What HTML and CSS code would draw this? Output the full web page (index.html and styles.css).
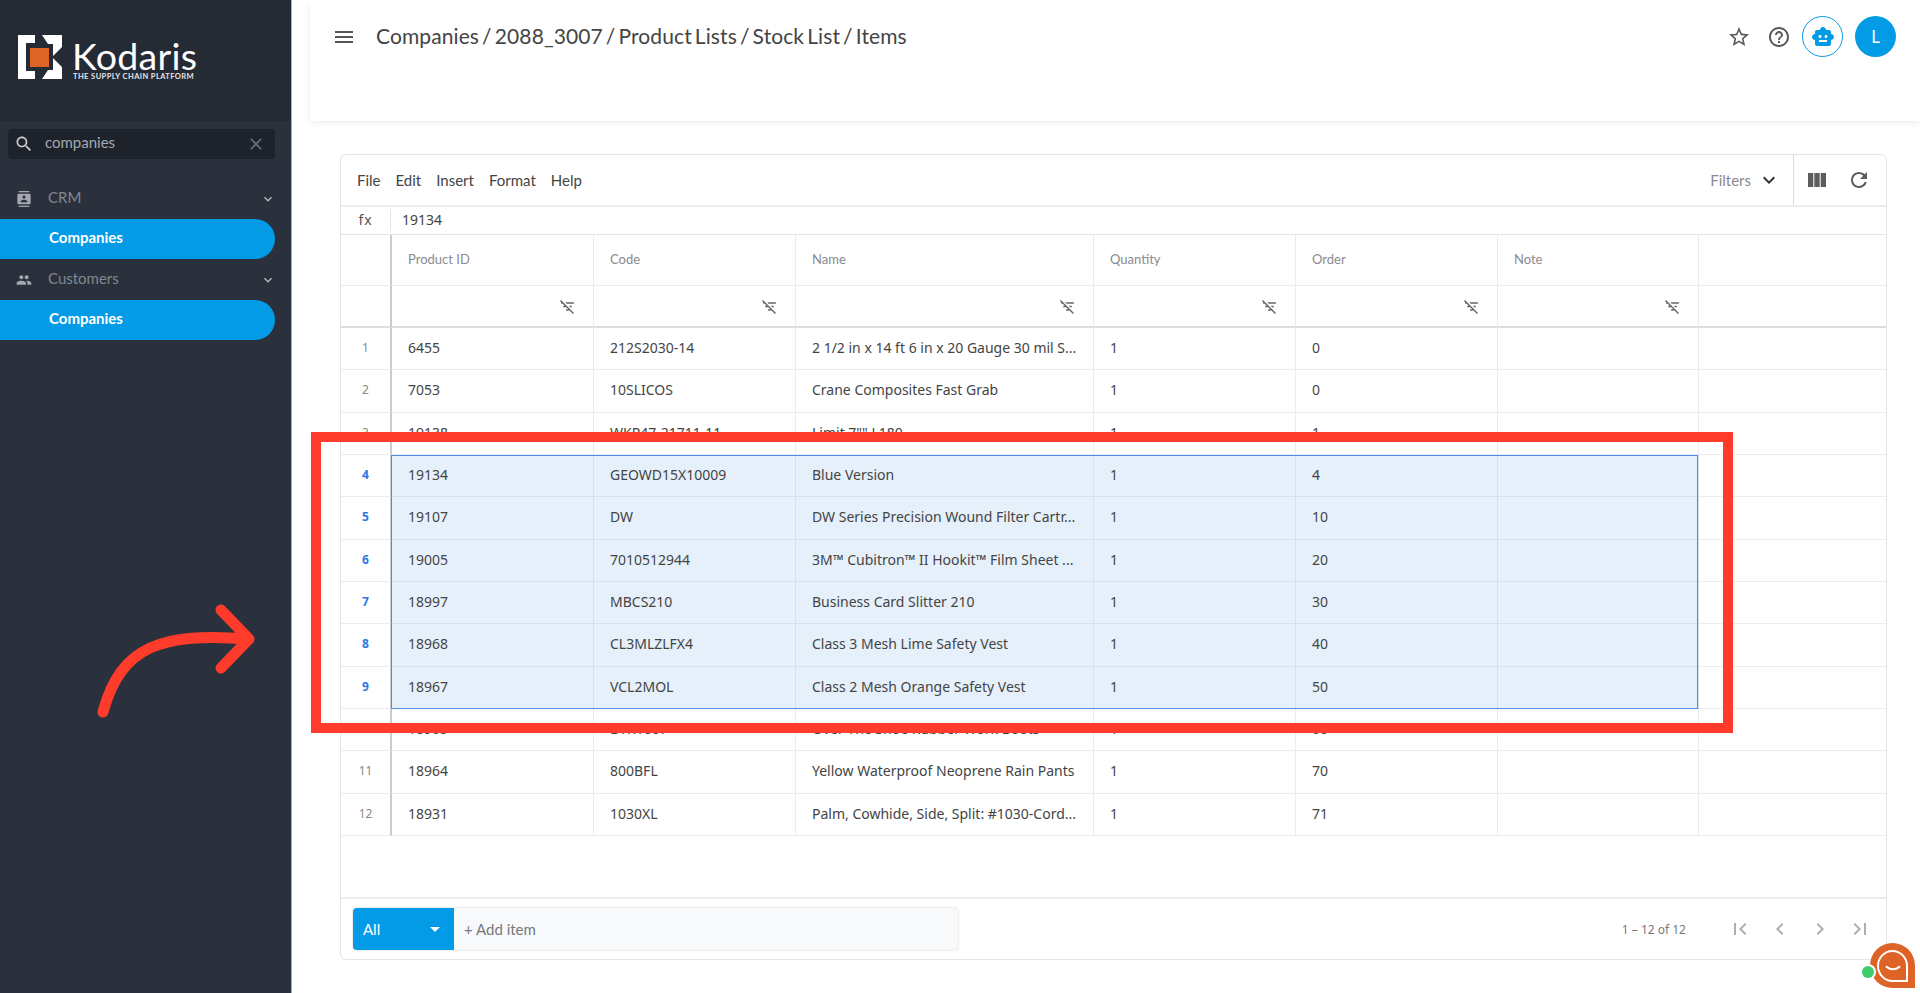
FILE: index.html
```html
<!DOCTYPE html>
<html lang="en">
<head>
<meta charset="utf-8">
<title>Kodaris - Items</title>
<link rel="stylesheet" href="styles.css">
</head>
<body>
<svg class="defs" width="0" height="0" aria-hidden="true">
  <symbol id="i-filter" viewBox="0 0 24 24"><path d="M10.83 8H21V6H8.83l2 2zm5 5H18v-2h-4.17l2 2zM14 16.83V18h-4v-2h3.17l-3-3H6v-2h2.17l-3-3H3V6h.17L1.39 4.22 2.8 2.81l18.38 18.38-1.41 1.41L14 16.83z"/></symbol>
  <symbol id="i-more" viewBox="0 0 24 24"><path d="M16.59 8.59L12 13.17 7.41 8.59 6 10l6 6 6-6z"/></symbol>
</svg>
<div class="app">
  <aside class="sidebar">
    <div class="brand">
      <svg class="logo-mark" viewBox="0 0 44 44">
        <path class="lw" d="M0 0H17V8H8V36H17V44H0Z"/>
        <path class="lw" d="M24 0H44V12L35 21V9H30ZM24 44H44V32L35 23V35H30Z"/>
        <rect class="lo" x="12" y="13" width="19" height="19"/>
      </svg>
      <div class="logo-text">
        <div class="logo-name">Kodaris</div>
        <div class="logo-tag">THE SUPPLY CHAIN PLATFORM</div>
      </div>
    </div>
    <div class="search">
      <svg class="search-ico" viewBox="0 0 24 24"><path d="M15.5 14h-.79l-.28-.27C15.41 12.59 16 11.11 16 9.5 16 5.91 13.09 3 9.5 3S3 5.91 3 9.5 5.91 16 9.5 16c1.61 0 3.09-.59 4.23-1.57l.27.28v.79l5 4.99L20.49 19l-4.99-5zm-6 0C7.01 14 5 11.99 5 9.5S7.01 5 9.5 5 14 7.01 14 9.5 11.99 14 9.5 14z"/></svg>
      <span class="search-text">companies</span>
      <svg class="search-x" viewBox="0 0 24 24"><path d="M19 6.41L17.59 5 12 10.59 6.41 5 5 6.41 10.59 12 5 17.59 6.41 19 12 13.41 17.59 19 19 17.59 13.41 12z"/></svg>
    </div>
    <nav class="nav">
      <div class="nav-group">
        <svg class="nav-ico" viewBox="0 0 24 24"><path d="M20 0H4v2h16V0zM4 24h16v-2H4v2zM20 4H4c-1.1 0-2 .9-2 2v12c0 1.1.9 2 2 2h16c1.1 0 2-.9 2-2V6c0-1.1-.9-2-2-2zm-8 2.75c1.24 0 2.25 1.01 2.25 2.25s-1.01 2.25-2.25 2.25S9.75 10.24 9.75 9 10.76 6.75 12 6.75zM17 17H7v-1.5c0-1.67 3.33-2.5 5-2.5s5 .83 5 2.5V17z"/></svg>
        <span class="nav-label">CRM</span>
        <svg class="nav-more"><use href="#i-more"/></svg>
      </div>
      <div class="nav-pill">Companies</div>
      <div class="nav-group">
        <svg class="nav-ico" viewBox="0 0 24 24"><path d="M16 11c1.66 0 2.99-1.34 2.99-3S17.66 5 16 5c-1.66 0-3 1.34-3 3s1.34 3 3 3zm-8 0c1.66 0 2.99-1.34 2.99-3S9.66 5 8 5C6.34 5 5 6.34 5 8s1.34 3 3 3zm0 2c-2.33 0-7 1.17-7 3.5V19h14v-2.5c0-2.33-4.67-3.5-7-3.5zm8 0c-.29 0-.62.02-.97.05 1.16.84 1.97 1.97 1.97 3.45V19h6v-2.5c0-2.33-4.67-3.5-7-3.5z"/></svg>
        <span class="nav-label">Customers</span>
        <svg class="nav-more"><use href="#i-more"/></svg>
      </div>
      <div class="nav-pill">Companies</div>
    </nav>
  </aside>

  <main class="main">
    <header class="topbar">
      <svg class="menu-ico" viewBox="0 0 24 24"><path d="M3 18h18v-2H3v2zm0-5h18v-2H3v2zm0-7v2h18V6H3z"/></svg>
      <div class="crumbs">Companies / 2088_3007 / Product Lists / Stock List / Items</div>
      <div class="top-actions">
        <svg class="top-ico" viewBox="0 0 24 24"><path d="M22 9.24l-7.19-.62L12 2 9.19 8.63 2 9.24l5.46 4.73L5.82 21 12 17.27 18.18 21l-1.63-7.03L22 9.24zM12 15.4l-3.76 2.27 1-4.28-3.32-2.88 4.38-.38L12 6.1l1.71 4.04 4.38.38-3.32 2.88 1 4.28L12 15.4z"/></svg>
        <svg class="top-ico" viewBox="0 0 24 24"><path d="M11 18h2v-2h-2v2zm1-16C6.48 2 2 6.48 2 12s4.48 10 10 10 10-4.48 10-10S17.52 2 12 2zm0 18c-4.41 0-8-3.59-8-8s3.59-8 8-8 8 3.59 8 8-3.59 8-8 8zm0-14c-2.21 0-4 1.79-4 4h2c0-1.1.9-2 2-2s2 .9 2 2c0 2-3 1.75-3 5h2c0-2.25 3-2.5 3-5 0-2.21-1.79-4-4-4z"/></svg>
        <div class="bot">
          <svg viewBox="0 0 24 24"><path d="M20 9V7c0-1.1-.9-2-2-2h-3c0-1.66-1.34-3-3-3S9 3.34 9 5H6c-1.1 0-2 .9-2 2v2c-1.66 0-3 1.34-3 3s1.34 3 3 3v4c0 1.1.9 2 2 2h12c1.1 0 2-.9 2-2v-4c1.66 0 3-1.34 3-3s-1.34-3-3-3zM7.5 11.5c0-.83.67-1.5 1.5-1.5s1.5.67 1.5 1.5S9.83 13 9 13s-1.5-.67-1.5-1.5zM16 17H8v-2h8v2zm-1-4c-.83 0-1.5-.67-1.5-1.5S14.17 10 15 10s1.5.67 1.5 1.5S15.83 13 15 13z"/></svg>
        </div>
        <div class="avatar">L</div>
      </div>
    </header>

    <div class="content">
      <section class="card">
        <div class="toolbar">
          <div class="menus"><span>File</span><span>Edit</span><span>Insert</span><span>Format</span><span>Help</span></div>
          <div class="filters">
            <span class="filters-label">Filters</span>
            <svg class="filters-more"><use href="#i-more"/></svg>
          </div>
          <div class="tools">
            <svg class="tool-ico" viewBox="0 0 24 24"><path d="M14.67 5v14H9.33V5h5.34zm1 14H21V5h-5.33v14zm-7.34 0V5H3v14h5.33z"/></svg>
            <svg class="tool-ico" viewBox="0 0 24 24"><path d="M17.65 6.35C16.2 4.9 14.21 4 12 4c-4.42 0-7.99 3.58-7.99 8s3.57 8 7.99 8c3.73 0 6.84-2.55 7.73-6h-2.08c-.82 2.33-3.04 4-5.65 4-3.31 0-6-2.69-6-6s2.69-6 6-6c1.66 0 3.14.69 4.22 1.78L13 11h7V4l-2.35 2.35z"/></svg>
          </div>
        </div>
        <div class="fxbar">
          <span class="fx">fx</span>
          <span class="fx-value">19134</span>
        </div>

        <div class="row head">
          <div class="c num"></div><div class="c">Product ID</div><div class="c">Code</div><div class="c">Name</div><div class="c">Quantity</div><div class="c">Order</div><div class="c">Note</div><div class="c"></div>
        </div>
        <div class="row filt">
          <div class="c num"></div>
          <div class="c"><svg class="f-ico"><use href="#i-filter"/></svg></div>
          <div class="c"><svg class="f-ico"><use href="#i-filter"/></svg></div>
          <div class="c"><svg class="f-ico"><use href="#i-filter"/></svg></div>
          <div class="c"><svg class="f-ico"><use href="#i-filter"/></svg></div>
          <div class="c"><svg class="f-ico"><use href="#i-filter"/></svg></div>
          <div class="c"><svg class="f-ico"><use href="#i-filter"/></svg></div>
          <div class="c"></div>
        </div>

        <div class="rows">
          <div class="row data"><div class="c num">1</div><div class="c">6455</div><div class="c">212S2030-14</div><div class="c">2 1/2 in x 14 ft 6 in x 20 Gauge 30 mil S...</div><div class="c">1</div><div class="c">0</div><div class="c"></div><div class="c"></div></div>
          <div class="row data"><div class="c num">2</div><div class="c">7053</div><div class="c">10SLICOS</div><div class="c">Crane Composites Fast Grab</div><div class="c">1</div><div class="c">0</div><div class="c"></div><div class="c"></div></div>
          <div class="row data"><div class="c num">3</div><div class="c">19138</div><div class="c">WKP47-21711-11</div><div class="c">Limit 7"" L180</div><div class="c">1</div><div class="c">1</div><div class="c"></div><div class="c"></div></div>
          <div class="row data sel"><div class="c num">4</div><div class="c">19134</div><div class="c">GEOWD15X10009</div><div class="c">Blue Version</div><div class="c">1</div><div class="c">4</div><div class="c"></div><div class="c end"></div></div>
          <div class="row data sel"><div class="c num">5</div><div class="c">19107</div><div class="c">DW</div><div class="c">DW Series Precision Wound Filter Cartr...</div><div class="c">1</div><div class="c">10</div><div class="c"></div><div class="c end"></div></div>
          <div class="row data sel"><div class="c num">6</div><div class="c">19005</div><div class="c">7010512944</div><div class="c">3M™ Cubitron™ II Hookit™ Film Sheet ...</div><div class="c">1</div><div class="c">20</div><div class="c"></div><div class="c end"></div></div>
          <div class="row data sel"><div class="c num">7</div><div class="c">18997</div><div class="c">MBCS210</div><div class="c">Business Card Slitter 210</div><div class="c">1</div><div class="c">30</div><div class="c"></div><div class="c end"></div></div>
          <div class="row data sel"><div class="c num">8</div><div class="c">18968</div><div class="c">CL3MLZLFX4</div><div class="c">Class 3 Mesh Lime Safety Vest</div><div class="c">1</div><div class="c">40</div><div class="c"></div><div class="c end"></div></div>
          <div class="row data sel"><div class="c num">9</div><div class="c">18967</div><div class="c">VCL2MOL</div><div class="c">Class 2 Mesh Orange Safety Vest</div><div class="c">1</div><div class="c">50</div><div class="c"></div><div class="c end"></div></div>
          <div class="row data"><div class="c num">10</div><div class="c">18965</div><div class="c">BYR1007</div><div class="c">Over The Shoe Rubber Work Boots</div><div class="c">1</div><div class="c">60</div><div class="c"></div><div class="c"></div></div>
          <div class="row data"><div class="c num">11</div><div class="c">18964</div><div class="c">800BFL</div><div class="c">Yellow Waterproof Neoprene Rain Pants</div><div class="c">1</div><div class="c">70</div><div class="c"></div><div class="c"></div></div>
          <div class="row data"><div class="c num">12</div><div class="c">18931</div><div class="c">1030XL</div><div class="c">Palm, Cowhide, Side, Split: #1030-Cord...</div><div class="c">1</div><div class="c">71</div><div class="c"></div><div class="c"></div></div>
          <div class="selection"></div>
        </div>

        <div class="footer">
          <div class="adder">
            <div class="adder-select"><span>All</span><i class="caret"></i></div>
            <div class="adder-input">+ Add item</div>
          </div>
          <div class="pager">
            <span class="pager-text">1 – 12 of 12</span>
            <svg class="pg-ico" viewBox="0 0 24 24"><path d="M18.41 16.59L13.82 12l4.59-4.59L17 6l-6 6 6 6zM6 6h2v12H6z"/></svg>
            <svg class="pg-ico" viewBox="0 0 24 24"><path d="M15.41 7.41L14 6l-6 6 6 6 1.41-1.41L10.83 12z"/></svg>
            <svg class="pg-ico" viewBox="0 0 24 24"><path d="M10 6L8.59 7.41 13.17 12l-4.58 4.59L10 18l6-6z"/></svg>
            <svg class="pg-ico" viewBox="0 0 24 24"><path d="M5.59 7.41L10.18 12l-4.59 4.59L7 18l6-6-6-6zM16 6h2v12h-2z"/></svg>
          </div>
        </div>
      </section>
    </div>
  </main>
</div>

<div class="red-box"></div>
<svg class="red-arrow" viewBox="0 0 170 120">
  <path d="M12 112C30 46 70 32 158 39M130 10L158 39L130 68"/>
</svg>

<div class="chat">
  <div class="chat-bubble">
    <div class="chat-inner">
      <svg class="chat-smile" viewBox="0 0 20 8"><path d="M2 2Q10 8 18 2"/></svg>
    </div>
  </div>
  <span class="chat-dot"></span>
</div>
</body>
</html>
```
FILE: styles.css
```css
* { box-sizing: border-box; }
html, body { margin: 0; height: 100%; overflow: hidden; }
body {
  font-family: "Lato", "Noto Sans", sans-serif;
  color: #444;
  background: #fff;
}
.defs { position: absolute; }
svg { display: block; flex: none; }

.app { display: flex; height: 993px; }

/* Sidebar */
.sidebar {
  width: 292px;
  flex: none;
  background: #2b313c;
  border-right: 1px solid #a9adb4;
  color: #fff;
}
.brand {
  height: 121px;
  background: #252b35;
  display: flex;
  align-items: flex-start;
  padding: 35px 0 0 18px;
  gap: 10px;
}
.logo-mark { width: 44px; height: 44px; }
.lw { fill: #fff; }
.lo { fill: #dd6327; }
.logo-text { margin-top: 5px; }
.logo-name { font-size: 37.5px; line-height: 32px; color: #fff; letter-spacing: .3px; }
.logo-tag { font-size: 7.5px; line-height: 9px; font-weight: 700; letter-spacing: .42px; color: #e4e5e7; white-space: nowrap; margin-left: 1px; }

.search {
  margin: 8px 16px 0 8px;
  height: 30px;
  background: #1e232b;
  border-radius: 4px;
  display: flex;
  align-items: center;
  padding: 0 9px 0 6px;
}
.search-ico { width: 20px; height: 20px; fill: #c9ccd1; }
.search-text { margin-left: 11px; font-size: 15px; color: #a3a8b0; flex: 1; position: relative; top: -2px; }
.search-x { width: 20px; height: 20px; fill: #6a6f78; }

.nav { margin-top: 20px; }
.nav-group {
  height: 40px;
  display: flex;
  align-items: center;
  padding: 0 15px 0 16px;
}
.nav-ico { width: 16px; height: 16px; fill: #a4a8ae; }
.nav-label { margin-left: 16px; font-size: 15px; color: #83878e; flex: 1; position: relative; top: -2px; }
.nav-more { width: 16px; height: 16px; fill: #b4b7bc; }
.nav-pill {
  width: 275px;
  height: 40px;
  margin-bottom: 1px;
  background: #039be5;
  border-radius: 0 20px 20px 0;
  display: flex;
  align-items: center;
  padding: 0 0 5px 49px;
  font-size: 15px;
  font-weight: 700;
  color: #fff;
}

/* Main */
.main { flex: 1; min-width: 0; display: flex; flex-direction: column; }
.topbar {
  height: 121px;
  flex: none;
  margin-left: 18px;
  display: flex;
  align-items: flex-start;
  padding: 22px 24px 0 22px;
  box-shadow: 0 2px 6px rgba(0,0,0,.08);
}
.menu-ico { width: 24px; height: 24px; fill: #555; margin-top: 3px; }
.crumbs { margin-left: 20px; font-size: 21px; line-height: 28px; letter-spacing: .1px; word-spacing: -2.4px; color: #444; flex: 1; }
.top-actions { display: flex; align-items: center; margin-top: -6px; gap: 16px; }
.top-ico { width: 24px; height: 24px; fill: #5a5a5a; }
.bot {
  width: 41px; height: 41px;
  border: 1px solid #039be5;
  border-radius: 50%;
  display: flex; align-items: center; justify-content: center;
  margin-left: -5px;
}
.bot svg { width: 24px; height: 24px; fill: #039be5; }
.avatar {
  width: 41px; height: 41px;
  border-radius: 50%;
  background: #039be5;
  color: #fff;
  font-size: 17px;
  display: flex; align-items: center; justify-content: center;
  margin-left: -4px;
}

.content { flex: 1; min-height: 0; padding: 33px 33px 33px 48px; display: flex; }
.card {
  flex: 1;
  min-width: 0;
  border: 1px solid #e4e4e6;
  border-radius: 6px;
  display: flex;
  flex-direction: column;
}

.toolbar {
  height: 52px;
  flex: none;
  display: flex;
  align-items: center;
  border-bottom: 2px solid #ececee;
}
.menus { display: flex; gap: 15px; padding-left: 16px; font-size: 15px; color: #444; flex: 1; }
.filters {
  display: flex; align-items: center; height: 100%;
  padding-right: 12px;
  border-right: 1px solid #dcdcde;
}
.filters-label { font-size: 15px; color: #8a8a90; }
.filters-more { width: 24px; height: 24px; fill: #333; margin-left: 6px; }
.tools { display: flex; gap: 18px; padding: 0 15px 0 11px; }
.tool-ico { width: 24px; height: 24px; fill: #5c5c5f; }

.fxbar {
  height: 28px;
  flex: none;
  display: flex;
  align-items: center;
  padding-bottom: 2px;
  border-bottom: 1px solid #e4e4e6;
  font-family: "Noto Sans", sans-serif;
  font-size: 14px;
}
.fx { width: 50px; text-align: center; border-right: 1px solid #e4e4e6; color: #555; letter-spacing: 1px; line-height: 22px; }
.fx-value { margin-left: 11px; color: #444; }

/* Grid */
.row {
  display: grid;
  grid-template-columns: 51px 202px 202px 298px 202px 202px 201px 1fr;
  flex: none;
}
.c {
  display: flex;
  align-items: center;
  min-width: 0;
  padding-left: 16px;
  border-right: 1px solid #ececee;
  border-bottom: 1px solid #ececee;
  white-space: nowrap;
  overflow: hidden;
}
.c:last-child { border-right: 0; }
.c.num { padding: 0; justify-content: center; border-right: 2px solid #c9cbd0; }
.head { height: 51px; }
.head .c { font-size: 13px; color: #8a8a90; padding-bottom: 3px; }
.filt { height: 42px; }
.filt .c { justify-content: flex-end; padding-right: 17px; border-bottom: 2px solid #dcdde0; }
.filt .c.num { padding: 0; }
.filt .c:last-child { padding: 0; }
.f-ico { width: 17px; height: 17px; fill: #66666a; }

.rows { position: relative; flex: 1; min-height: 0; }
.data { height: 42.33px; font-family: "Noto Sans", sans-serif; font-size: 14px; color: #444; }
.data .c { padding-bottom: 2px; }
.data .c.num { font-size: 12px; color: #888; padding-bottom: 2px; }
.sel .c { background: #e6f0fb; border-color: #d6e0ec; }
.sel .c.num { background: #fff; color: #2a78e4; font-weight: 700; border-right-color: #c9cbd0; border-bottom-color: #ececee; }
.sel .c.end { background: #fff; border-color: #ececee; }
.selection {
  position: absolute;
  left: 50px;
  top: 127px;
  width: 1307px;
  height: 254px;
  border: 1px solid #4a8ee6;
  pointer-events: none;
}

.footer {
  height: 62px;
  flex: none;
  border-top: 2px solid #ececee;
  display: flex;
  align-items: center;
  padding: 0 14px 0 12px;
  justify-content: space-between;
}
.adder {
  width: 605px;
  height: 42px;
  display: flex;
  border-radius: 4px;
  background: #f8f9fb;
  box-shadow: 0 0 2px rgba(0,0,0,.25);
}
.adder-select {
  width: 101px;
  background: #039be5;
  border-radius: 4px 0 0 4px;
  color: #fff;
  font-size: 15px;
  display: flex;
  align-items: center;
  justify-content: space-between;
  padding: 0 14px 0 10px;
}
.caret {
  width: 0; height: 0;
  border-left: 5px solid transparent;
  border-right: 5px solid transparent;
  border-top: 5px solid #fff;
}
.adder-input { padding-left: 10px; display: flex; align-items: center; font-size: 15px; color: #77777d; }
.pager { display: flex; align-items: center; gap: 16px; }
.pager-text { font-family: "Noto Sans", sans-serif; font-size: 12px; color: #777; margin-right: 26px; }
.pg-ico { width: 24px; height: 24px; fill: #aeaeb3; }

/* Annotations over the page */
.red-box {
  position: absolute;
  left: 311px;
  top: 432px;
  width: 1422px;
  height: 301px;
  border: 10px solid #ff3b2b;
  pointer-events: none;
}
.red-arrow {
  position: absolute;
  left: 91px;
  top: 600px;
  width: 170px;
  height: 120px;
  fill: none;
  stroke: #ff3b2b;
  stroke-width: 11;
  stroke-linecap: round;
  stroke-linejoin: round;
}

.chat { position: absolute; left: 1862px; top: 943px; width: 58px; height: 46px; }
.chat-bubble {
  position: absolute;
  right: 5px;
  top: 0;
  width: 45px;
  height: 45px;
  background: #dd6327;
  border-radius: 50% 50% 0 50%;
  display: flex;
  align-items: center;
  justify-content: center;
}
.chat-inner {
  width: 31px;
  height: 32px;
  border: 2px solid #fff;
  border-radius: 50% 50% 0 50%;
  display: flex;
  align-items: center;
  justify-content: center;
}
.chat-smile { width: 16px; height: 7px; fill: none; stroke: #fff; stroke-width: 2.5; stroke-linecap: round; margin-top: 6px; }
.chat-dot {
  position: absolute;
  left: 0;
  top: 23px;
  width: 12px;
  height: 12px;
  border-radius: 50%;
  background: #3ecb6c;
  box-shadow: 0 0 0 2px #fff;
}
```
